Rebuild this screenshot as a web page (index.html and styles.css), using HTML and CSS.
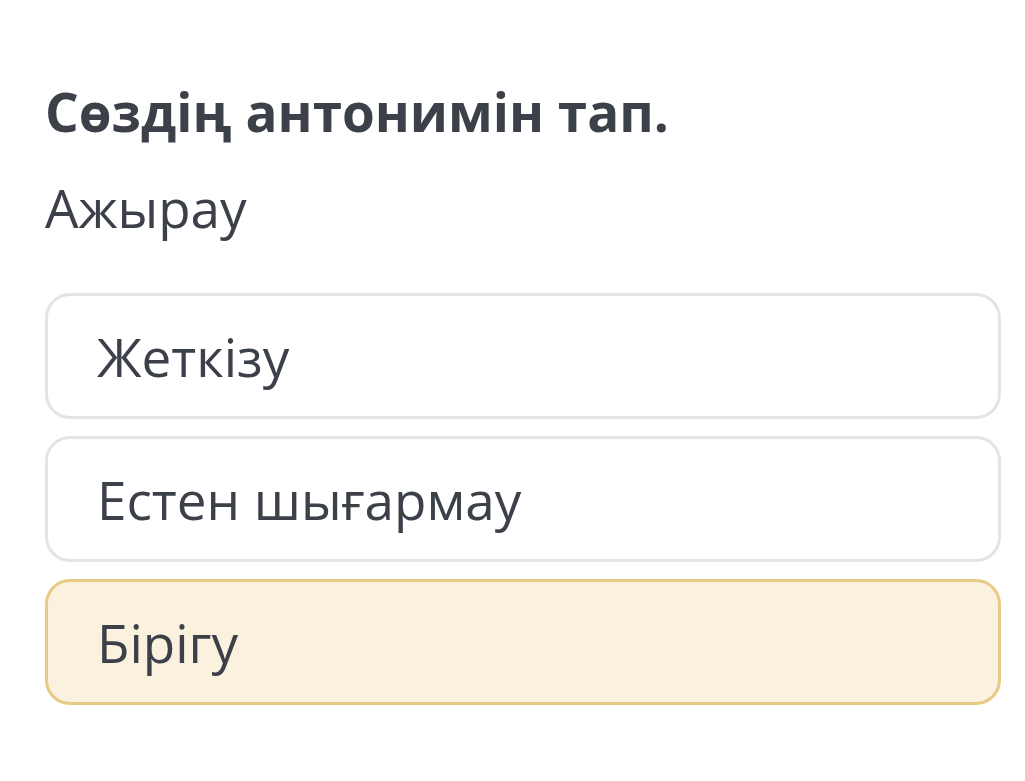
FILE: index.html
```
<!DOCTYPE html>
<html>
<head>
<meta charset="utf-8">
<link rel="stylesheet" href="styles.css">
</head>
<body>
<div class="page">
  <h1 class="title">Сөздің антонимін тап.</h1>
  <p class="word">Ажырау</p>
  <div class="options">
    <div class="option">Жеткізу</div>
    <div class="option">Естен шығармау</div>
    <div class="option selected">Бірігу</div>
  </div>
</div>
</body>
</html>
```
FILE: styles.css
```
html, body { margin: 0; padding: 0; background: #fff; }
.page {
  font-family: "Open Sans", "Noto Sans", sans-serif;
  color: #3c4149;
  padding: 77px 24px 0 45px;
}
.title {
  margin: 0;
  font-size: 53px;
  font-weight: 700;
  line-height: 70px;
}
.word {
  margin: 26px 0 0 0;
  font-size: 53px;
  font-weight: 400;
  line-height: 70px;
}
.options {
  margin-top: 50px;
  display: flex;
  flex-direction: column;
  gap: 17px;
}
.option {
  height: 126px;
  box-sizing: border-box;
  border: 3px solid #e2e5e8;
  border-radius: 25px;
  padding: 0 0 0 49px;
  display: flex;
  align-items: center;
  font-size: 53px;
}
.selected {
  background: #faf1df;
  border-color: #e8ca84;
}
```
